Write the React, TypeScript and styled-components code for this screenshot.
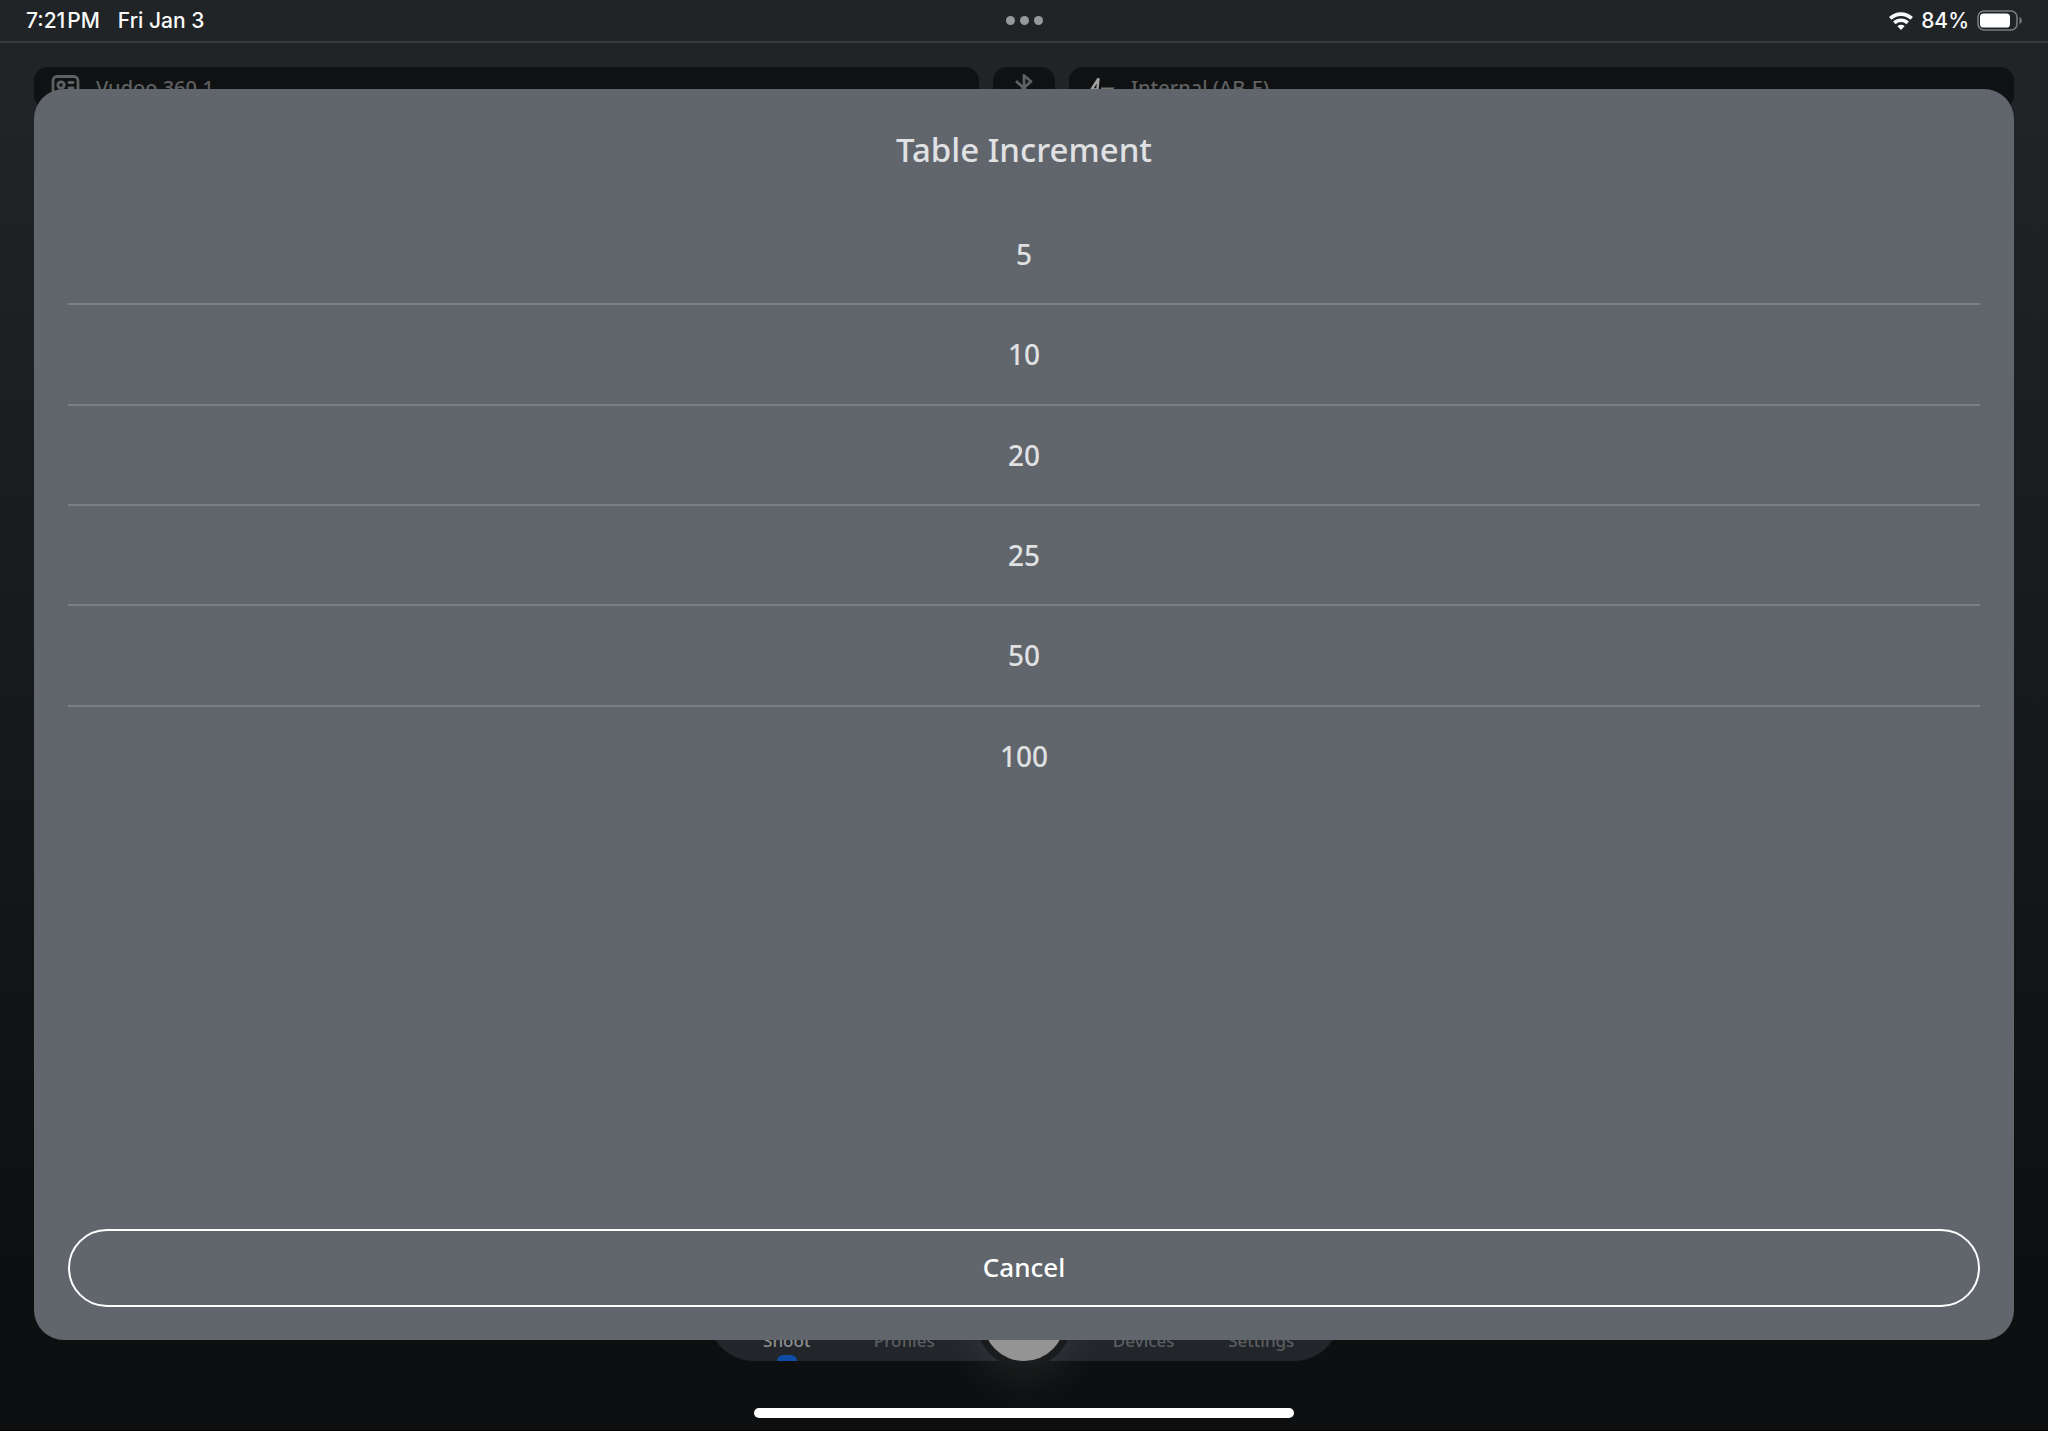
import React, { useState } from "react";
import styled, { createGlobalStyle } from "styled-components";

const GlobalStyle = createGlobalStyle`
  *, *::before, *::after { box-sizing: border-box; }
  html, body { margin: 0; padding: 0; background: #0e0f10; }
  button { font: inherit; color: inherit; background: none; border: 0; padding: 0; cursor: pointer; }
  h1, ul { margin: 0; padding: 0; }
`;

const UI_FONT = `"Noto Sans", "Open Sans", sans-serif`;
const SYSTEM_FONT = `Inter, "Liberation Sans", sans-serif`;

const Screen = styled.div`
  position: relative;
  display: flex;
  flex-direction: column;
  min-height: 100vh;
  overflow: hidden;
  font-family: ${UI_FONT};
  background: linear-gradient(180deg, #202427 0, #202427 8%, #0e0f10 88%, #0e0f10 100%);
`;

const StatusBar = styled.header`
  display: grid;
  grid-template-columns: 1fr auto 1fr;
  align-items: center;
  height: 43px;
  padding: 0 26px;
  border-bottom: 2px solid #373b3e;
  font-family: ${SYSTEM_FONT};
  font-size: 21px;
  font-weight: 500;
  line-height: 24px;
  color: #fafafa;
`;

const Clock = styled.div`
  display: flex;
  gap: 18px;
`;

const Dots = styled.button`
  display: flex;
  gap: 5px;
`;

const Dot = styled.span`
  width: 9px;
  height: 9px;
  border-radius: 50%;
  background: #96999c;
`;

const Indicators = styled.div`
  display: flex;
  justify-content: flex-end;
  align-items: center;
  gap: 8px;
`;

const DeviceRow = styled.div`
  display: grid;
  grid-template-columns: 1fr 62px 1fr;
  gap: 14px;
  padding: 24px 34px 0;
`;

const DeviceButton = styled.button<{ $centered?: boolean }>`
  display: flex;
  align-items: center;
  justify-content: ${(p) => (p.$centered ? "center" : "flex-start")};
  gap: 16px;
  height: 42px;
  padding: ${(p) => (p.$centered ? "0" : "0 17px")};
  border-radius: 14px;
  background: #101112;
  font-size: 20px;
  font-weight: 500;
  line-height: 24px;
  color: #5f6061;
`;

const Spacer = styled.div`
  flex: 1;
`;

const TabBar = styled.nav`
  position: relative;
  display: grid;
  grid-template-columns: 1fr 1fr 122px 1fr 1fr;
  align-self: center;
  width: 632px;
  height: 92px;
  padding: 0 20px;
  border-radius: 48px;
  background: #22262a;
`;

const Tab = styled.button<{ $active?: boolean }>`
  display: flex;
  flex-direction: column;
  align-items: center;
  justify-content: flex-end;
  gap: 2px;
  font-size: 17px;
  font-weight: 500;
  line-height: 24px;
  color: ${(p) => (p.$active ? "#8e8f90" : "#5b5e61")};

  &::after {
    content: "";
    width: 20px;
    height: 6px;
    border-radius: 6px 6px 0 0;
    background: ${(p) => (p.$active ? "#0e4ba5" : "transparent")};
  }
`;

const FireSlot = styled.div`
  display: flex;
  justify-content: center;
  align-items: flex-end;
`;

const FireButton = styled.button`
  width: 82px;
  height: 82px;
  border-radius: 50%;
  background: #949494;
  box-shadow: 0 0 0 7px #191b1c, 0 8px 50px 2px rgba(150, 155, 160, 0.2);
`;

const HomeArea = styled.footer`
  display: flex;
  justify-content: center;
  align-items: flex-end;
  height: 70px;
  padding-bottom: 12px;
  border-bottom: 1px solid #000;
`;

const HomeIndicator = styled.span`
  width: 540px;
  height: 10px;
  border-radius: 5px;
  background: #fff;
`;

const Sheet = styled.section`
  position: absolute;
  inset: 89px 34px 91px;
  display: flex;
  flex-direction: column;
  padding: 32px 34px 33px;
  border-radius: 30px;
  background: #61656c;
  color: #e0e1e3;
`;

const Title = styled.h1`
  margin-bottom: 26px;
  font-size: 33px;
  font-weight: 500;
  line-height: 58px;
  text-align: center;
`;

const Options = styled.ul`
  display: grid;
  grid-auto-rows: 1fr;
  height: 602px;
  list-style: none;
`;

const OptionItem = styled.li`
  display: flex;
  border-bottom: 2px solid #7d8083;

  &:last-child {
    border-bottom-color: transparent;
  }
`;

const OptionButton = styled.button`
  flex: 1;
  font-size: 28px;
  font-weight: 500;
  line-height: 36px;
`;

const CancelButton = styled.button`
  height: 78px;
  margin-top: auto;
  padding-bottom: 2px;
  border: 2px solid #fff;
  border-radius: 39px;
  font-size: 26px;
  font-weight: 500;
  line-height: 36px;
  color: #fff;
`;

const WifiIcon = () => (
  <svg width="24" height="18" viewBox="0 0 24 18" fill="none" stroke="#fafafa" strokeWidth="3.6" aria-label="Wi-Fi">
    <path d="M1.300 6.400a15.400 15.400 0 0 1 21.400 0" />
    <path d="M5.300 10.900a9.600 9.600 0 0 1 13.400 0" />
    <path d="M12 18l-3.600-3.700a5.200 5.200 0 0 1 7.200 0z" fill="#fafafa" stroke="none" />
  </svg>
);

const BatteryIcon = () => (
  <svg width="45" height="21" viewBox="0 0 45 21" aria-label="Battery">
    <rect x="1" y="1" width="39" height="19" rx="6" fill="none" stroke="#797b7d" strokeWidth="1.6" />
    <rect x="3" y="3.5" width="30" height="14" rx="3.6" fill="#fff" />
    <path d="M42.5 7v7c1.7-.6 2.3-2 2.3-3.5s-.6-2.9-2.3-3.5z" fill="#797b7d" />
  </svg>
);

const ProfileIcon = () => (
  <svg width="29" height="27" viewBox="0 0 29 27" fill="none" stroke="#5f6061" strokeWidth="2.8" strokeLinecap="round">
    <rect x="2" y="1.5" width="25" height="24" rx="4" />
    <circle cx="10" cy="10" r="3.2" />
    <path d="M18 7.500h4M18 13h4M6 20c1-4 7-4 8 0M18 19h4" />
  </svg>
);

const BluetoothIcon = () => (
  <svg width="18" height="28" viewBox="0 0 18 28" fill="none" stroke="#5f6061" strokeWidth="2.8" strokeLinejoin="round">
    <path d="M1 7l15 13.500-7 6V1.500l7 6L1 21" />
  </svg>
);

const BallisticsLogo = () => (
  <svg width="29" height="24" viewBox="0 0 29 24" fill="none">
    <path d="M0 22L12.500 2.500L10.500 22M5 13.500h6" stroke="#a3a3a3" strokeWidth="2.4" />
    <path d="M15 11.500h14l-4 3H15z" fill="#77766e" />
  </svg>
);

const INCREMENTS = [5, 10, 20, 25, 50, 100];

export default function App() {
  const [, setIncrement] = useState<number | null>(null);

  return (
    <>
      <GlobalStyle />
      <Screen>
        <StatusBar>
          <Clock>
            <span>7:21{"\u200A"}PM</span>
            <span>Fri Jan 3</span>
          </Clock>
          <Dots aria-label="Multitasking">
            <Dot />
            <Dot />
            <Dot />
          </Dots>
          <Indicators>
            <WifiIcon />
            <span>84%</span>
            <BatteryIcon />
          </Indicators>
        </StatusBar>

        <DeviceRow>
          <DeviceButton>
            <ProfileIcon />
            Vudoo 360.1
          </DeviceButton>
          <DeviceButton $centered aria-label="Bluetooth">
            <BluetoothIcon />
          </DeviceButton>
          <DeviceButton>
            <BallisticsLogo />
            Internal (AB-E)
          </DeviceButton>
        </DeviceRow>

        <Spacer />

        <TabBar>
          <Tab $active>Shoot</Tab>
          <Tab>Profiles</Tab>
          <FireSlot>
            <FireButton aria-label="Fire" />
          </FireSlot>
          <Tab>Devices</Tab>
          <Tab>Settings</Tab>
        </TabBar>

        <HomeArea>
          <HomeIndicator />
        </HomeArea>

        <Sheet role="dialog" aria-modal="true" aria-labelledby="sheet-title">
          <Title id="sheet-title">Table Increment</Title>
          <Options>
            {INCREMENTS.map((value) => (
              <OptionItem key={value}>
                <OptionButton onClick={() => setIncrement(value)}>{value}</OptionButton>
              </OptionItem>
            ))}
          </Options>
          <CancelButton>Cancel</CancelButton>
        </Sheet>
      </Screen>
    </>
  );
}
